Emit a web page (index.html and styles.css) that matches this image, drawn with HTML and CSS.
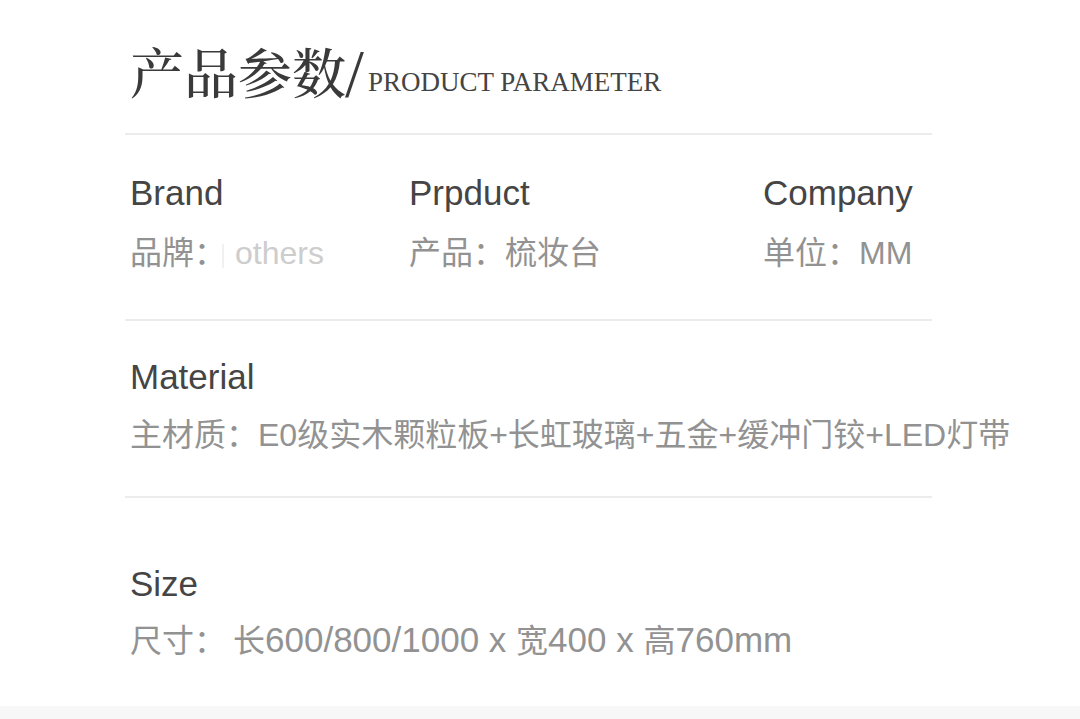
FILE: index.html
```html
<!DOCTYPE html>
<html lang="zh-CN">
<head>
<meta charset="utf-8">
<title>产品参数</title>
<link rel="stylesheet" href="styles.css">
</head>
<body>
<div class="page">
  <div class="sheet">
    <header class="title">
      <span class="title-cn">产品参数</span><span class="title-slash">/</span><span class="title-en">PRODUCT PARAMETER</span>
    </header>
    <hr class="rule">
    <section class="grid3">
      <div class="item">
        <div class="label">Brand</div>
        <div class="value">品牌：<span class="ghost-bar"></span><span class="ghost">others</span></div>
      </div>
      <div class="item item-2">
        <div class="label">Prpduct</div>
        <div class="value">产品：梳妆台</div>
      </div>
      <div class="item item-3">
        <div class="label">Company</div>
        <div class="value">单位：MM</div>
      </div>
    </section>
    <hr class="rule rule-2">
    <section class="item item-material">
      <div class="label">Material</div>
      <div class="value value-wide">主材质：E0级实木颗粒板+长虹玻璃+五金+缓冲门铰+LED灯带</div>
    </section>
    <hr class="rule rule-3">
    <section class="item item-size">
      <div class="label">Size</div>
      <div class="value value-size">尺寸：<span class="gap"></span>长<span class="num">600/800/1000 x </span>宽<span class="num">400 x </span>高<span class="num">760mm</span></div>
    </section>
  </div>
  <div class="footer-strip"></div>
</div>
</body>
</html>
```
FILE: styles.css
```css
html, body {
  margin: 0;
  padding: 0;
  background: #ffffff;
}
body {
  width: 1080px;
  height: 719px;
  overflow: hidden;
  font-family: "Liberation Sans", "Noto Sans CJK SC", sans-serif;
}
.page {
  height: 719px;
  display: flex;
  flex-direction: column;
}
.sheet {
  flex: 1;
  padding: 41px 0 0 125px;
}
.title {
  padding-left: 5px;
  height: 60px;
  line-height: 60px;
  color: #3a3a3a;
  white-space: nowrap;
}
.title-cn {
  font-family: "Noto Serif CJK SC", "Noto Sans CJK SC", serif;
  font-size: 54px;
  font-weight: 500;
  vertical-align: baseline;
}
.title-slash {
  font-family: "Liberation Serif", serif;
  font-size: 68px;
  margin: 0 4px 0 -1px;
  color: #3a3a3a;
  vertical-align: -2px;
}
.title-en {
  font-family: "Liberation Serif", serif;
  font-size: 27px;
  color: #444;
  vertical-align: 3px;
}
.rule {
  width: 807px;
  height: 2px;
  border: 0;
  margin: 32px 0 0 0;
  background: #ececec;
}
.rule-2 {
  margin-top: 46px;
}
.rule-3 {
  margin-top: 41px;
}
.grid3 {
  display: grid;
  grid-template-columns: 279px 354px 1fr;
  padding: 38px 0 0 5px;
}
.item {
  display: flex;
  flex-direction: column;
}
.item-material, .item-size {
  padding: 36px 0 0 5px;
}
.item-size {
  padding-top: 66px;
}
.label {
  font-size: 35px;
  line-height: 40px;
  color: #454545;
}
.value {
  margin-top: 20px;
  font-size: 32px;
  line-height: 40px;
  color: #929292;
  white-space: nowrap;
}
.item-material .value {
  margin-top: 18px;
}
.ghost-bar {
  display: inline-block;
  width: 2px;
  height: 24px;
  margin: 0 11px 0 -4px;
  background: #f0f0f0;
  vertical-align: -4px;
}
.ghost {
  color: #cdcdcd;
}
.value-size {
  margin-top: 16px;
}
.gap {
  display: inline-block;
  width: 7px;
}
.num {
  font-size: 35px;
}
.footer-strip {
  height: 13px;
  background: #f7f7f7;
}
```
